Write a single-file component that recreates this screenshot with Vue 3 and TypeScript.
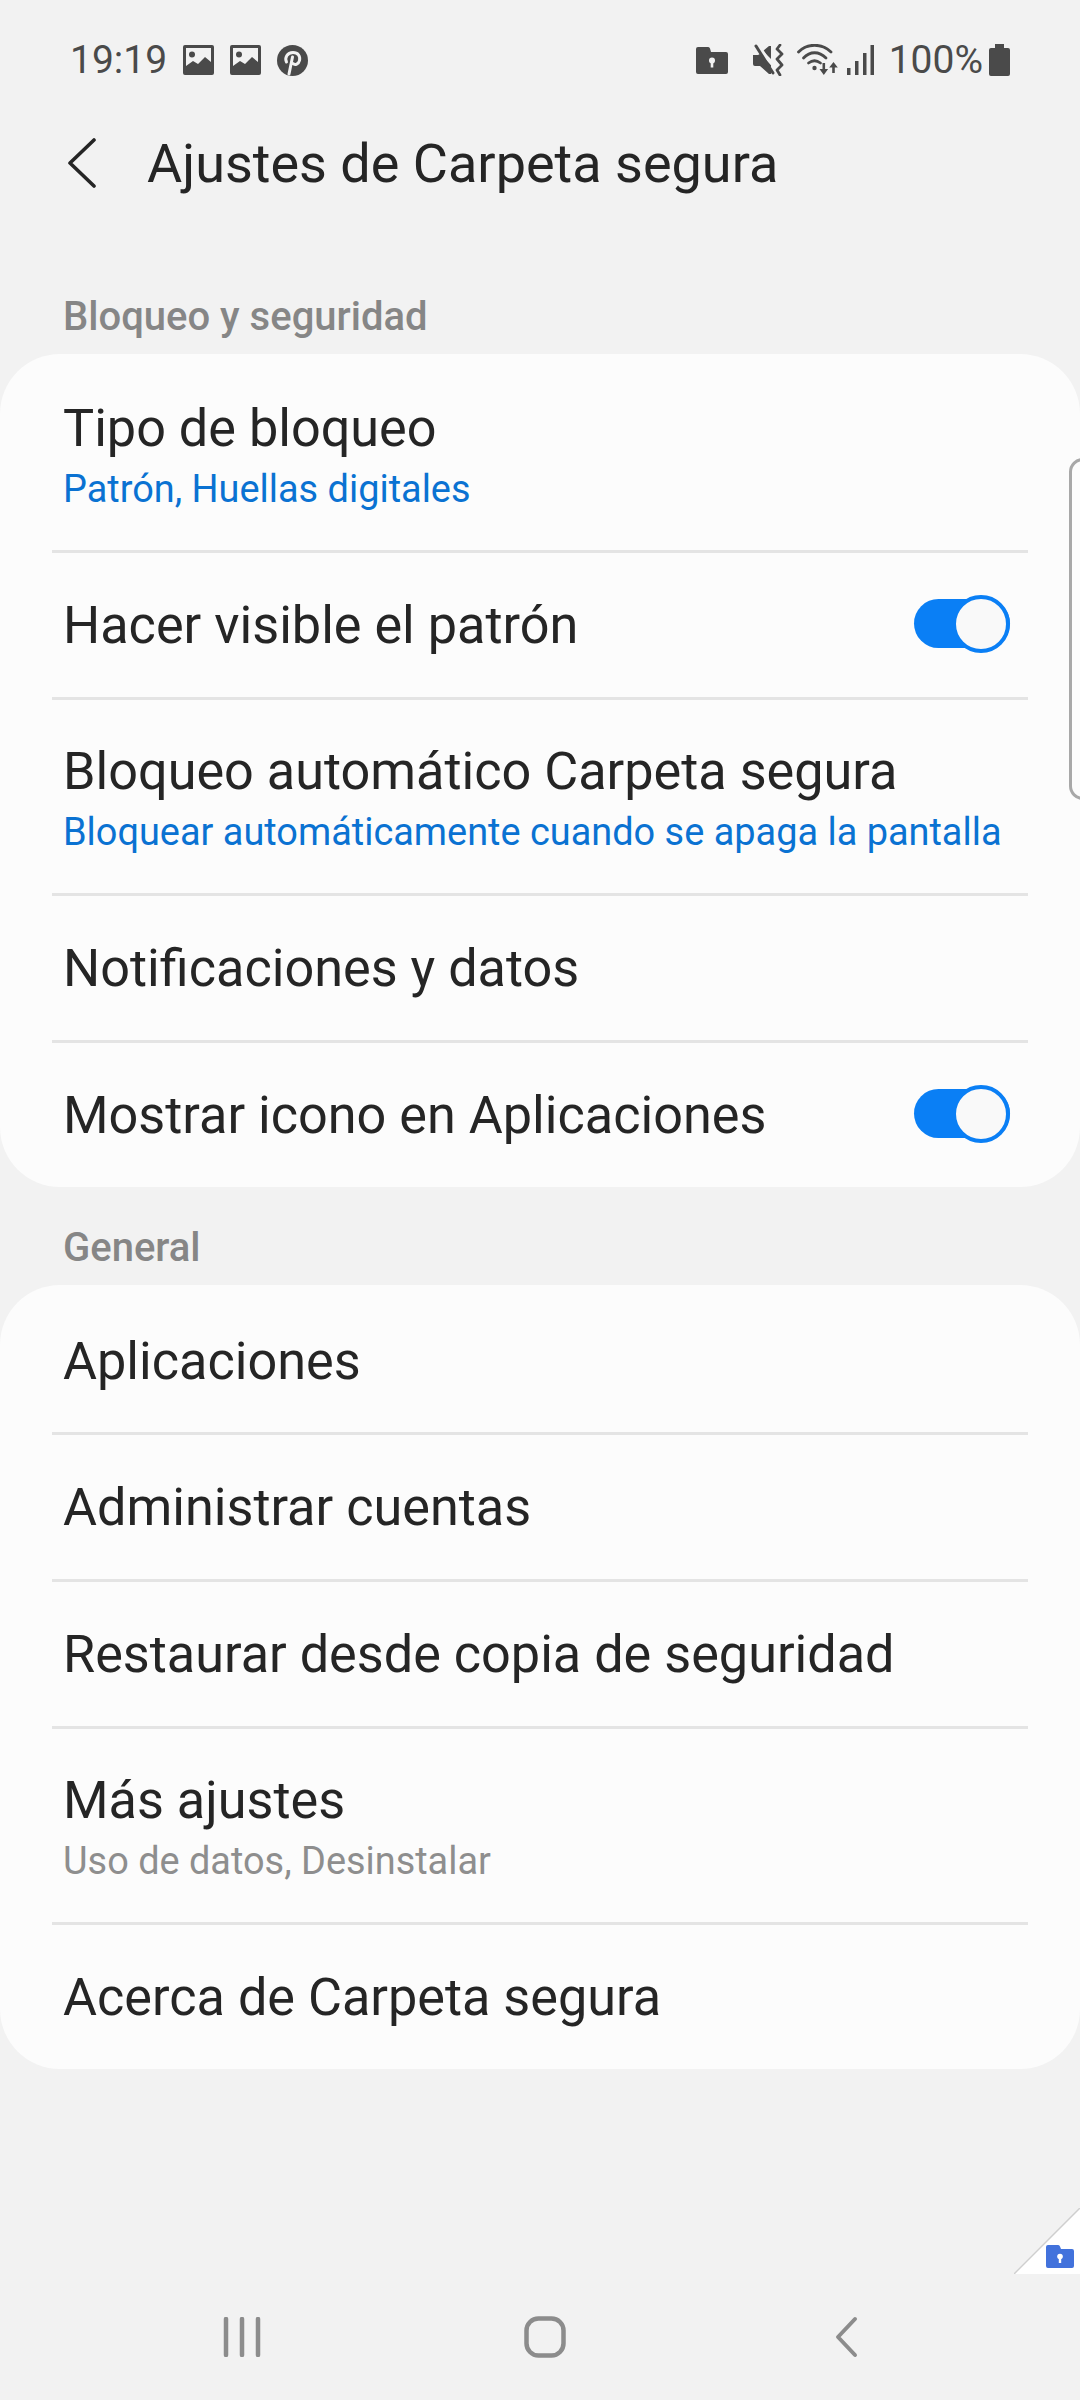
<script setup lang="ts">
interface Row {
  title: string
  sub?: string
  subKind?: 'blue' | 'grey'
  toggle?: boolean
}

const seguridad: Row[] = [
  { title: 'Tipo de bloqueo', sub: 'Patrón, Huellas digitales', subKind: 'blue' },
  { title: 'Hacer visible el patrón', toggle: true },
  { title: 'Bloqueo automático Carpeta segura', sub: 'Bloquear automáticamente cuando se apaga la pantalla', subKind: 'blue' },
  { title: 'Notificaciones y datos' },
  { title: 'Mostrar icono en Aplicaciones', toggle: true },
]

const general: Row[] = [
  { title: 'Aplicaciones' },
  { title: 'Administrar cuentas' },
  { title: 'Restaurar desde copia de seguridad' },
  { title: 'Más ajustes', sub: 'Uso de datos, Desinstalar', subKind: 'grey' },
  { title: 'Acerca de Carpeta segura' },
]

const grupos = [
  { label: 'Bloqueo y seguridad', rows: seguridad },
  { label: 'General', rows: general },
]
</script>

<template>
  <div class="page">
    <div class="status">
      <div class="status-left">
        <span class="time">19:19</span>
        <svg v-for="n in 2" :key="n" class="st-icon" width="31" height="30" viewBox="0 0 31 30">
          <path fill="#4a4a4a" fill-rule="evenodd" d="M2 0h27a2 2 0 0 1 2 2v26a2 2 0 0 1-2 2H2a2 2 0 0 1-2-2V2a2 2 0 0 1 2-2zM3 3v18l7-5 5 3 7-7 6 5V3z" />
          <circle cx="9" cy="9.500" r="3" fill="#4a4a4a" />
        </svg>
        <svg class="st-icon" width="31" height="31" viewBox="0 0 31 31">
          <circle cx="15.500" cy="15.500" r="15.500" fill="#4a4a4a" />
          <path fill="none" stroke="#f2f2f2" stroke-width="3" stroke-linecap="round" d="M9.500 17c-2-4 .5-9.500 6.500-9.500 5 0 7.500 3.500 6.500 8-.8 3.500-4.500 5-6.500 3M15.500 12l-3.500 17" />
        </svg>
      </div>
      <div class="status-right">
        <svg class="folder" width="32" height="27" viewBox="0 0 32 27">
          <path fill="#4a4a4a" d="M2 0h10a2 2 0 0 1 2 1.500L15 5h15a2 2 0 0 1 2 2v18a2 2 0 0 1-2 2H2a2 2 0 0 1-2-2V2a2 2 0 0 1 2-2z" />
          <circle cx="16" cy="13.500" r="3" fill="#f2f2f2" />
          <rect x="14.700" y="14" width="2.600" height="6.500" fill="#f2f2f2" />
        </svg>
        <svg class="mute" width="31" height="32" viewBox="0 0 31 32">
          <path fill="#4a4a4a" d="M0 11h5l2-1 11 11v9h-2L7 22H2a2 2 0 0 1-2-2zM10 7l6-5h2v13z" />
          <path stroke="#f2f2f2" stroke-width="2" d="M6 1l17 26" />
          <path stroke="#4a4a4a" stroke-width="3" stroke-linecap="round" d="M3 2l17 27" />
          <path fill="none" stroke="#4a4a4a" stroke-width="2.800" stroke-linecap="round" stroke-linejoin="round" d="M27 1l-3 4 5 5-5 5 5 6-5 5 3 5" />
        </svg>
        <svg class="wifi" width="41" height="32" viewBox="0 0 41 32">
          <g fill="none" stroke="#4a4a4a" stroke-width="2.800" stroke-linecap="round">
            <path d="M1.500 8C10-1 25-1 34 8" />
            <path d="M6.500 14C13 7 22 7 29 14" />
            <path d="M11.500 19c4-3 8-3 12 0" />
          </g>
          <circle cx="17.500" cy="24" r="2.200" fill="#4a4a4a" />
          <path fill="#4a4a4a" d="M25.500 19h2.600v6h3l-4.300 6-4.300-6h3zM36.500 18l4.300 5.500h-3V29h-2.600v-5.500h-3z" />
        </svg>
        <svg class="signal" width="27" height="30" viewBox="0 0 27 30">
          <rect x="0" y="23" width="3.500" height="7" fill="#4a4a4a" />
          <rect x="8" y="16" width="3.500" height="14" fill="#4a4a4a" />
          <rect x="16" y="8" width="3.500" height="22" fill="#4a4a4a" />
          <rect x="23.500" y="0" width="3.500" height="30" fill="#4a4a4a" />
        </svg>
        <span class="pct">100%</span>
        <svg class="battery" width="21" height="32" viewBox="0 0 21 32">
          <path fill="#4a4a4a" d="M6 0h9v4h4a2 2 0 0 1 2 2v24a2 2 0 0 1-2 2H2a2 2 0 0 1-2-2V6a2 2 0 0 1 2-2h4z" />
        </svg>
      </div>
    </div>

    <div class="appbar">
      <svg class="back" width="28" height="50" viewBox="0 0 28 50">
        <path fill="none" stroke="#252525" stroke-width="3.600" stroke-linecap="round" stroke-linejoin="round" d="M26 2L2 25l24 23" />
      </svg>
      <h1 class="page-title">Ajustes de Carpeta segura</h1>
    </div>

    <template v-for="g in grupos" :key="g.label">
      <div class="section-label">{{ g.label }}</div>
      <div class="card">
        <div v-for="r in g.rows" :key="r.title" class="row" :class="{ tall: r.sub }">
          <div class="row-text">
            <div class="row-title">{{ r.title }}</div>
            <div v-if="r.sub" class="row-sub" :class="r.subKind">{{ r.sub }}</div>
          </div>
          <div v-if="r.toggle" class="switch"><span class="knob"></span></div>
        </div>
      </div>
    </template>

    <div class="scroll-handle"></div>

    <div class="corner">
      <svg class="corner-bg" width="66" height="66" viewBox="0 0 66 66">
        <path fill="#fff" d="M66 0v66H0z" />
        <path stroke="#cfcfcf" stroke-width="1.500" d="M66 0L0 66" />
      </svg>
      <svg class="corner-folder" width="28" height="23" viewBox="0 0 28 23">
        <path fill="#4272dc" d="M2 0h10a2 2 0 0 1 2 1.500L15 4h11a2 2 0 0 1 2 2v15a2 2 0 0 1-2 2H2a2 2 0 0 1-2-2V2a2 2 0 0 1 2-2z" />
        <circle cx="14" cy="11.500" r="2.800" fill="#fff" />
        <rect x="12.800" y="12" width="2.400" height="6" fill="#fff" />
      </svg>
    </div>

    <div class="navbar">
      <svg width="40" height="40" viewBox="0 0 40 40">
        <g stroke="#8c8c8c" stroke-width="4.500" stroke-linecap="round">
          <path d="M4 2v36M20 2v36M36 2v36" />
        </g>
      </svg>
      <svg class="nav-home" width="42" height="42" viewBox="0 0 42 42">
        <rect x="2.500" y="2.500" width="37" height="37" rx="12" fill="none" stroke="#8c8c8c" stroke-width="4.500" />
      </svg>
      <svg width="24" height="42" viewBox="0 0 24 42">
        <path fill="none" stroke="#8c8c8c" stroke-width="4" stroke-linecap="round" stroke-linejoin="round" d="M21 3L4 21l17 18" />
      </svg>
    </div>
  </div>
</template>

<style>
html, body { margin: 0; background: #f2f2f2; }
</style>

<style scoped>
.page { position: relative; width: 1080px; height: 2400px; overflow: hidden; background: #f2f2f2; font-family: Roboto, sans-serif; color: #252525; }
.status { height: 60px; padding: 30px 70px 0 70px; display: flex; justify-content: space-between; align-items: center; color: #4a4a4a; }
.status-left, .status-right { display: flex; align-items: center; }
.status-left { gap: 16px; }
.time { font-size: 39px; }
.pct { font-size: 39px; margin-left: 15px; margin-right: 6px; }
.folder { margin-right: 25px; }
.mute { margin-right: 13px; }
.wifi { margin-right: 9px; }
.appbar { height: 146px; margin-bottom: 20px; padding-left: 68px; display: flex; align-items: center; }
.back { margin-right: 51px; }
.page-title { margin: 0; font-size: 54px; font-weight: 400; color: #252525; }
.section-label { padding: 37px 0 14px 63px; font-size: 40px; line-height: 47px; font-weight: 500; color: #868686; }
.card { background: #fcfcfc; border-radius: 60px; }
.row { height: 147px; margin: 0 52px; padding: 1px 11px 0; box-sizing: border-box; display: flex; align-items: center; justify-content: space-between; border-top: 3px solid #e4e4e4; }
.row.tall { height: 196px; }
.row:first-child { border-top: none; padding-top: 5px; }
.row-title { font-size: 52.2px; color: #252525; }
.row-sub { font-size: 37.9px; margin-top: 8px; }
.row-sub.blue { color: #0a72d2; }
.row-sub.grey { color: #8e8e8e; }
.switch { position: relative; width: 96px; height: 49px; border-radius: 25px; background: #0a7ff5; margin-right: 7px; margin-top: -5px; flex-shrink: 0; }
.knob { position: absolute; right: 0; top: -4px; width: 58px; height: 58px; box-sizing: border-box; border: 4px solid #0a7ff5; border-radius: 50%; background: #f9f9f9; }
.scroll-handle { position: absolute; right: -10px; top: 458px; width: 15px; height: 336px; border: 3px solid #a8a8a8; border-radius: 14px 0 0 14px; }
.corner { position: absolute; right: 0; top: 2208px; width: 66px; height: 66px; }
.corner-bg { position: absolute; inset: 0; }
.corner-folder { position: absolute; right: 6px; bottom: 6px; }
.navbar { position: absolute; left: 0; right: 0; bottom: 40px; height: 46px; display: flex; align-items: center; justify-content: space-between; padding: 0 222px; }
.nav-home { margin-right: 6px; }
</style>
